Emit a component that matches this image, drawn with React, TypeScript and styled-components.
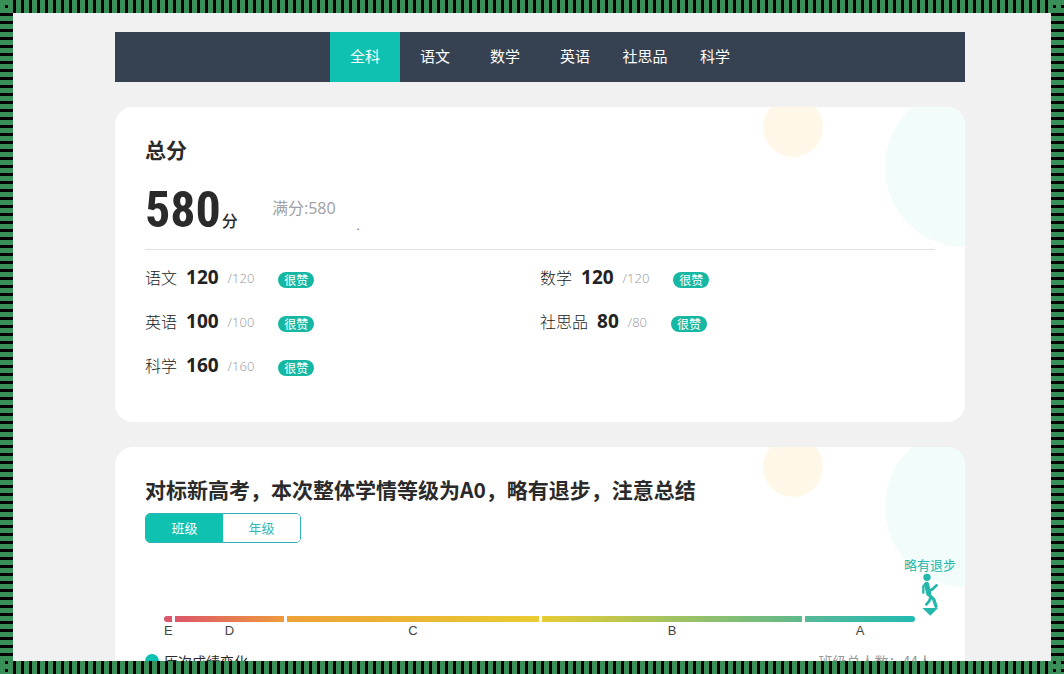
import React, { useState } from "react";
import styled, { createGlobalStyle } from "styled-components";

const teal = "#0fc1b0";

const GlobalStyle = createGlobalStyle`
  * { box-sizing: border-box; }
  body {
    margin: 0;
    background: #f1f1f1;
    color: #2a2a2a;
    font-family: "Open Sans", "Noto Sans CJK SC", sans-serif;
  }
  h2, p, ul { margin: 0; padding: 0; }
`;

const Frame = styled.div`
  display: grid;
  grid-template: 13px minmax(0, 1fr) 13px / 13px minmax(0, 1fr) 13px;
  height: 100vh;
  overflow: hidden;
  background:
    repeating-linear-gradient(90deg, #389058 0 5px, transparent 5px 8px),
    repeating-linear-gradient(#389058 0 5px, transparent 5px 8px),
    #000;
`;

const Stripe = styled.div<{ $area: string; $angle: number }>`
  grid-area: ${(p) => p.$area};
  background: repeating-linear-gradient(${(p) => p.$angle}deg, #000 0 3px, #389058 3px 8px);
`;

const Page = styled.main`
  grid-area: 2 / 2;
  display: flex;
  flex-direction: column;
  gap: 25px;
  padding: 19px 86px 0 102px;
  overflow: hidden;
  background: #f1f1f1;
`;

const Nav = styled.nav`
  display: flex;
  flex-shrink: 0;
  justify-content: center;
  background: #364252;
`;

const NavButton = styled.button<{ $active: boolean }>`
  width: 70px;
  height: 50px;
  padding: 0 0 2px;
  border: 0;
  background: ${(p) => (p.$active ? teal : "transparent")};
  color: #fff;
  font: 400 15px/20px "Noto Sans CJK SC", sans-serif;
  cursor: pointer;
`;

const Card = styled.section`
  position: relative;
  flex-shrink: 0;
  display: flex;
  flex-direction: column;
  padding: 28px 30px 35px;
  border-radius: 18px;
  overflow: hidden;
  background: #fff;
  isolation: isolate;

  &::before, &::after {
    content: "";
    position: absolute;
    z-index: -1;
    border-radius: 50%;
  }
  &::before {
    top: -10px;
    right: 142px;
    width: 60px;
    height: 60px;
    background: #fff8e9;
  }
  &::after {
    top: -20px;
    right: -80px;
    width: 160px;
    height: 160px;
    background: #f1fcfb;
  }
`;

const Title = styled.h2`
  font: 700 21px/28px "Noto Sans CJK SC", sans-serif;
`;

const Total = styled.div`
  display: flex;
  align-items: center;
  height: 87px;
  padding-top: 4px;
  border-bottom: 1px solid #e2e2e2;
`;

const TotalGroup = styled.div`
  display: flex;
  align-items: baseline;
  gap: 1px;
  min-width: 127px;
  padding-top: 4px;
`;

const TotalScore = styled.strong`
  font: 700 50px/60px "Liberation Sans Narrow", "Roboto Condensed", "DejaVu Sans Condensed", sans-serif;
`;

const Unit = styled.span`
  font: 500 16px/20px "Noto Sans CJK SC", sans-serif;
`;

const FullScore = styled.span`
  color: #a0a0a6;
  font-size: 16px;
  line-height: 20px;
`;

const Speck = styled.span`
  align-self: flex-end;
  margin: 0 0 18px 21px;
  font-size: 10px;
  line-height: 10px;
`;

const Subjects = styled.ul`
  display: grid;
  grid-template-columns: 1fr 1fr;
  list-style: none;
  padding-top: 5px;
`;

const Subject = styled.li`
  display: flex;
  align-items: center;
  height: 44px;
  color: #222;
  font-size: 16px;
  font-weight: 300;
`;

const Score = styled.strong`
  margin-left: 9px;
  font: 700 19px/24px "Open Sans", sans-serif;
`;

const OutOf = styled.span`
  margin: 2px 0 0 9px;
  color: #96969c;
  font-size: 13px;
`;

const Badge = styled.span`
  margin: 6px 0 0 24px;
  width: 36px;
  border-radius: 8px;
  background: #16b8a3;
  color: #fff;
  font: 400 12px/16px "Noto Sans CJK SC", sans-serif;
  text-align: center;
`;

const Toggle = styled.div`
  display: flex;
  align-self: flex-start;
  margin-top: 10px;
  border: 1px solid #2fb3b8;
  border-radius: 5px;
  overflow: hidden;
`;

const ToggleButton = styled.button<{ $active: boolean }>`
  width: 77px;
  height: 28px;
  padding: 0;
  border: 0;
  background: ${(p) => (p.$active ? teal : "#fff")};
  color: ${(p) => (p.$active ? "#fff" : "#35b8b6")};
  font: 400 13px/20px "Noto Sans CJK SC", sans-serif;
  cursor: pointer;
`;

const Marker = styled.div`
  display: flex;
  flex-direction: column;
  align-items: center;
  align-self: flex-end;
  margin: 13px -21px 0 0;
  color: #24b7ab;
  font: 400 13px/17px "Noto Sans CJK SC", sans-serif;

  svg { display: block; }
`;

const Scale = styled.div`
  display: grid;
  grid-template-columns: minmax(0, 8fr) 109fr 252fr 260fr 110fr;
  column-gap: 3px;
  padding: 0 20px 0 19px;
`;

const Level = styled.div<{ $from: string; $to: string }>`
  color: #444;
  font: 400 13px/17px "Liberation Sans", sans-serif;
  text-align: center;

  &::before {
    content: "";
    display: block;
    height: 6px;
    background: linear-gradient(90deg, ${(p) => p.$from}, ${(p) => p.$to});
  }
  &:first-child::before { border-radius: 3px 0 0 3px; }
  &:last-child::before { border-radius: 0 3px 3px 0; }
`;

const Footer = styled.div`
  display: flex;
  align-items: center;
  justify-content: space-between;
  margin-top: 12px;
  font: 400 14px/20px "Noto Sans CJK SC", sans-serif;
`;

const History = styled.span`
  display: flex;
  align-items: center;
  gap: 5px;

  &::before {
    content: "";
    width: 14px;
    height: 14px;
    border-radius: 50%;
    background: ${teal};
  }
`;

const Headcount = styled.span`
  margin-right: 3px;
  color: #999;
`;

const tabs = ["全科", "语文", "数学", "英语", "社思品", "科学"];

const subjects = [
  { name: "语文", score: 120 },
  { name: "数学", score: 120 },
  { name: "英语", score: 100 },
  { name: "社思品", score: 80 },
  { name: "科学", score: 160 },
];

const levels = [
  { name: "E", from: "#d9566b", to: "#db566a" },
  { name: "D", from: "#dc566a", to: "#ee9a3c" },
  { name: "C", from: "#eda137", to: "#e9cb32" },
  { name: "B", from: "#e6cb34", to: "#5fb98c" },
  { name: "A", from: "#58b998", to: "#22bab0" },
];

const Walker = () => (
  <svg width="18" height="43" viewBox="182 84 54 129" fill="none" stroke="currentColor" strokeLinecap="round" strokeLinejoin="round" aria-hidden="true">
    <circle cx="200" cy="97" r="11" fill="currentColor" stroke="none" />
    <path d="M199 118 L205 146" strokeWidth="15" />
    <path d="M197 115 L189 124 L189 143" strokeWidth="7" />
    <path d="M207 138 L217 132 L229 121" strokeWidth="8" />
    <path d="M205 148 L220 163 L227 184" strokeWidth="10" />
    <path d="M210 158 L207 168 L198 178" strokeWidth="8" />
    <path d="M186 189 L233 189 L210 212 Z" fill="currentColor" stroke="none" />
  </svg>
);

export default function App() {
  const [tab, setTab] = useState("全科");
  const [scope, setScope] = useState("班级");

  return (
    <>
      <GlobalStyle />
      <Frame>
        <Stripe $area="1 / 2" $angle={90} />
        <Stripe $area="2 / 1" $angle={180} />
        <Stripe $area="2 / 3" $angle={180} />
        <Stripe $area="3 / 2" $angle={90} />
        <Page>
          <Nav>
            {tabs.map((t) => (
              <NavButton key={t} $active={t === tab} onClick={() => setTab(t)}>{t}</NavButton>
            ))}
          </Nav>
          <Card>
            <Title>总分</Title>
            <Total>
              <TotalGroup>
                <TotalScore>580</TotalScore>
                <Unit>分</Unit>
              </TotalGroup>
              <FullScore>满分:580</FullScore>
              <Speck>.</Speck>
            </Total>
            <Subjects>
              {subjects.map((s) => (
                <Subject key={s.name}>
                  {s.name}
                  <Score>{s.score}</Score>
                  <OutOf>/{s.score}</OutOf>
                  <Badge>很赞</Badge>
                </Subject>
              ))}
            </Subjects>
          </Card>
          <Card>
            <Title>对标新高考，本次整体学情等级为A0，略有退步，注意总结</Title>
            <Toggle>
              {["班级", "年级"].map((s) => (
                <ToggleButton key={s} $active={s === scope} onClick={() => setScope(s)}>{s}</ToggleButton>
              ))}
            </Toggle>
            <Marker>
              略有退步
              <Walker />
            </Marker>
            <Scale>
              {levels.map((l) => (
                <Level key={l.name} $from={l.from} $to={l.to}>{l.name}</Level>
              ))}
            </Scale>
            <Footer>
              <History>历次成绩变化</History>
              <Headcount>班级总人数：44人</Headcount>
            </Footer>
          </Card>
        </Page>
      </Frame>
    </>
  );
}
